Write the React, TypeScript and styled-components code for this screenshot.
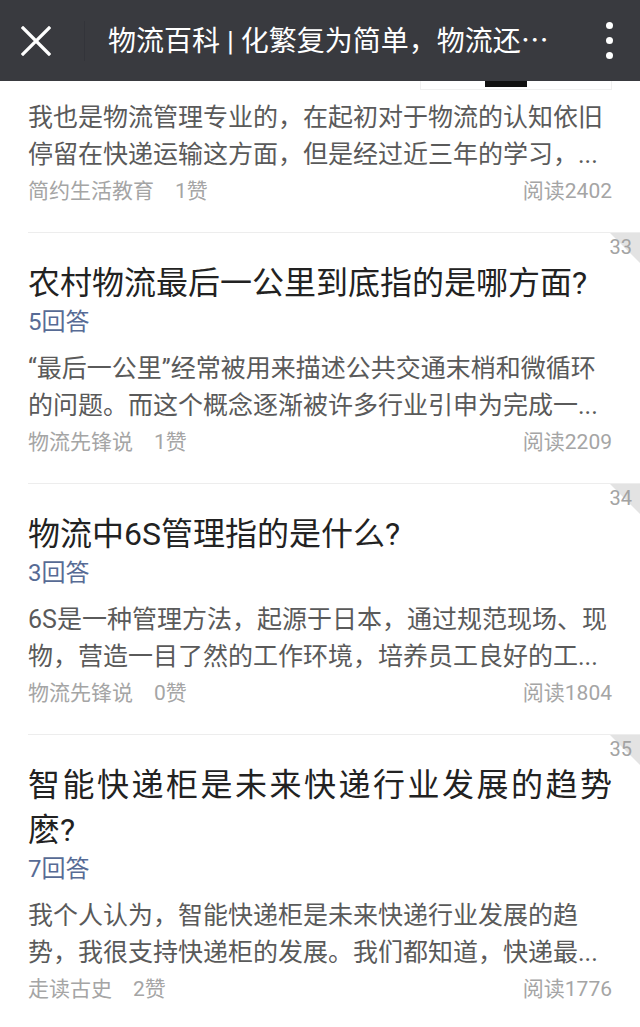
import React from "react";
import styled, { createGlobalStyle } from "styled-components";

const GlobalStyle = createGlobalStyle`
  html, body { margin: 0; padding: 0; background: #ffffff; }
  body { font-family: "Roboto", "Noto Sans CJK SC", "Noto Sans", sans-serif; -webkit-font-smoothing: antialiased; }
  * { box-sizing: border-box; }
`;

const Page = styled.div`
  width: 640px;
  height: 1027px;
  overflow: hidden;
  background: #fff;
`;

const Header = styled.header`
  height: 81px;
  background: #393a3f;
  display: flex;
  align-items: center;
`;

const CloseButton = styled.div`
  width: 84px;
  height: 81px;
  display: flex;
  align-items: center;
  justify-content: center;
  padding-right: 12px;
`;

const Separator = styled.div`
  width: 1px;
  height: 40px;
  background: #33343a;
`;

const HeaderTitle = styled.div`
  flex: 1;
  padding-left: 23px;
  color: #ffffff;
  font-size: 28px;
  line-height: 81px;
  white-space: nowrap;
  overflow: hidden;
`;

const CjkEllipsis = styled.span`
  font-family: "Noto Sans CJK SC", sans-serif;
`;

const MoreButton = styled.div`
  width: 86px;
  height: 81px;
  display: flex;
  flex-direction: column;
  align-items: center;
  justify-content: center;
  gap: 8px;
  padding-left: 25px;
`;

const Dot = styled.span`
  width: 7px;
  height: 7px;
  border-radius: 50%;
  background: #ffffff;
`;

const Strip = styled.div`
  height: 16px;
  display: flex;
  justify-content: flex-end;
  padding-right: 28px;
`;

const ImageStub = styled.div`
  width: 192px;
  height: 9px;
  border: 1px solid #f0f0f0;
  border-top: none;
  display: flex;
  justify-content: center;
  padding-right: 20px;
`;

const StubBar = styled.div`
  width: 42px;
  height: 6px;
  background: #111;
`;

const Card = styled.article<{ $first?: boolean }>`
  position: relative;
  margin-left: 28px;
  padding: ${(p) => (p.$first ? "2px" : "28px")} 28px 23px 0;
  border-top: ${(p) => (p.$first ? "none" : "1px solid #ededed")};
`;

const Badge = styled.div`
  position: absolute;
  top: 0;
  right: 0;
  width: 40px;
  height: 32px;
`;

const Corner = styled.div`
  position: absolute;
  top: 0;
  right: 0;
  width: 0;
  height: 0;
  border-top: 30px solid #e3e3e3;
  border-left: 30px solid transparent;
`;

const Rank = styled.span`
  position: absolute;
  top: 2px;
  right: 8px;
  font-size: 20px;
  line-height: 24px;
  color: #a3a3a3;
`;

const Title = styled.h2`
  margin: 0;
  font-size: 32px;
  font-weight: 400;
  line-height: 45px;
  color: #222222;
  text-align: justify;
`;

const Answers = styled.div`
  font-size: 24px;
  line-height: 32px;
  color: #576b95;
`;

const Body = styled.div<{ $first?: boolean }>`
  margin-top: ${(p) => (p.$first ? "0" : "12px")};
  font-size: 25px;
  line-height: 37px;
  color: #5a5a5a;
`;

const BodyLine = styled.div`
  white-space: nowrap;
`;

const Meta = styled.div`
  display: flex;
  justify-content: space-between;
  font-size: 21px;
  line-height: 36px;
  color: #a5a5a5;
`;

const MetaLeft = styled.div`
  display: flex;
  gap: 21px;
`;

type Item = {
  rank?: number;
  title?: string;
  answers?: number;
  lines: string[];
  author: string;
  likes: number;
  reads: number;
};

const items: Item[] = [
  {
    lines: [
      "我也是物流管理专业的，在起初对于物流的认知依旧",
      "停留在快递运输这方面，但是经过近三年的学习，...",
    ],
    author: "简约生活教育",
    likes: 1,
    reads: 2402,
  },
  {
    rank: 33,
    title: "农村物流最后一公里到底指的是哪方面?",
    answers: 5,
    lines: [
      "“最后一公里”经常被用来描述公共交通末梢和微循环",
      "的问题。而这个概念逐渐被许多行业引申为完成一...",
    ],
    author: "物流先锋说",
    likes: 1,
    reads: 2209,
  },
  {
    rank: 34,
    title: "物流中6S管理指的是什么?",
    answers: 3,
    lines: [
      "6S是一种管理方法，起源于日本，通过规范现场、现",
      "物，营造一目了然的工作环境，培养员工良好的工...",
    ],
    author: "物流先锋说",
    likes: 0,
    reads: 1804,
  },
  {
    rank: 35,
    title: "智能快递柜是未来快递行业发展的趋势麽?",
    answers: 7,
    lines: [
      "我个人认为，智能快递柜是未来快递行业发展的趋",
      "势，我很支持快递柜的发展。我们都知道，快递最...",
    ],
    author: "走读古史",
    likes: 2,
    reads: 1776,
  },
];

export default function App() {
  return (
    <Page>
      <GlobalStyle />
      <Header>
        <CloseButton>
          <svg width="30" height="30" viewBox="0 0 30 30">
            <path d="M2 2 L28 28 M28 2 L2 28" stroke="#fff" strokeWidth="3.2" strokeLinecap="square" fill="none" />
          </svg>
        </CloseButton>
        <Separator />
        <HeaderTitle>
          物流百科 | 化繁复为简单，物流还<CjkEllipsis>…</CjkEllipsis>
        </HeaderTitle>
        <MoreButton>
          <Dot />
          <Dot />
          <Dot />
        </MoreButton>
      </Header>
      <Strip>
        <ImageStub>
          <StubBar />
        </ImageStub>
      </Strip>
      {items.map((it, i) => (
        <Card key={i} $first={i === 0}>
          {it.rank !== undefined && (
            <Badge>
              <Corner />
              <Rank>{it.rank}</Rank>
            </Badge>
          )}
          {it.title && <Title>{it.title}</Title>}
          {it.answers !== undefined && <Answers>{it.answers}回答</Answers>}
          <Body $first={i === 0}>
            {it.lines.map((l, j) => (
              <BodyLine key={j}>{l}</BodyLine>
            ))}
          </Body>
          <Meta>
            <MetaLeft>
              <span>{it.author}</span>
              <span>{it.likes}赞</span>
            </MetaLeft>
            <span>阅读{it.reads}</span>
          </Meta>
        </Card>
      ))}
    </Page>
  );
}
